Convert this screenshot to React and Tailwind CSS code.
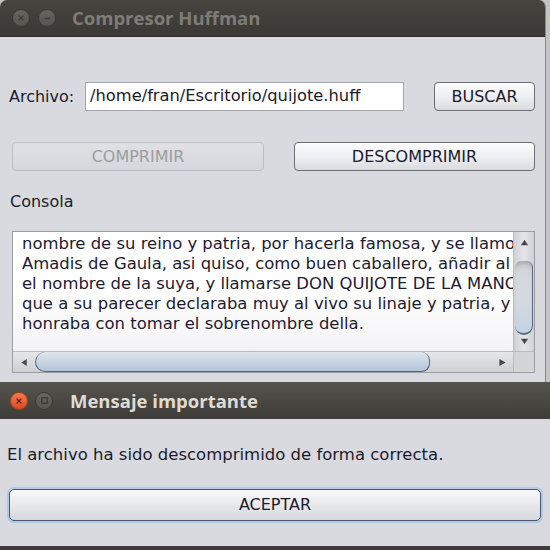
import React from "react";

const sans = { fontFamily: '"DejaVu Sans", sans-serif' };
const title = { fontFamily: '"Open Sans", "DejaVu Sans", sans-serif' };

const lines = [
  "nombre de su reino y patria, por hacerla famosa, y se llamo",
  "Amadis de Gaula, asi quiso, como buen caballero, añadir al suyo",
  "el nombre de la suya, y llamarse DON QUIJOTE DE LA MANCHA, con",
  "que a su parecer declaraba muy al vivo su linaje y patria, y la",
  "honraba con tomar el sobrenombre della.",
];

const Arrow = ({ dir }) => {
  const pts = {
    up: "1,7 5,1 9,7",
    down: "1,1 5,7 9,1",
    left: "7,1 1,5 7,9",
    right: "1,1 8,5 1,9",
  }[dir];
  const box = dir === "up" || dir === "down" ? "0 0 10 8" : "0 0 9 10";
  return (
    <svg viewBox={box} className="w-[9px] h-[9px]">
      <polygon points={pts} fill="#4a4a4a" />
    </svg>
  );
};

const TitleButton = ({ red, kind }) => (
  <div
    className={`w-[18px] h-[18px] rounded-full flex items-center justify-center ${
      red
        ? "bg-gradient-to-b from-[#f37a4f] to-[#d84a1c] border border-[#a8401c]"
        : "bg-gradient-to-b from-[#66655f] to-[#55544f] border border-[#3a3935]"
    }`}
  >
    {kind === "x" && (
      <svg viewBox="0 0 10 10" className="w-[8px] h-[8px]">
        <path d="M2 2 L8 8 M8 2 L2 8" stroke={red ? "#5a1a08" : "#3c3b37"} strokeWidth="1.6" />
      </svg>
    )}
    {kind === "min" && (
      <svg viewBox="0 0 10 10" className="w-[9px] h-[9px]">
        <path d="M2 5 L8 5" stroke="#3c3b37" strokeWidth="1.6" />
      </svg>
    )}
    {kind === "max" && (
      <svg viewBox="0 0 10 10" className="w-[9px] h-[9px]">
        <rect x="2" y="2" width="6" height="6" fill="none" stroke="#3a3935" strokeWidth="1.4" />
      </svg>
    )}
  </div>
);

const Button = ({ children, className = "", disabled }) => (
  <div
    className={`h-[29px] rounded-[4px] flex items-center justify-center text-[16px] ${
      disabled
        ? "border border-[#bcbec4] bg-gradient-to-b from-[#dfe1e5] to-[#d5d7dc] text-[#9d9d9f]"
        : "border border-[#6a6e76] bg-gradient-to-b from-[#fcfcfd] via-[#eeeff2] to-[#d9dbe0] text-[#1c1a2a] shadow-[inset_0_1px_0_#ffffff]"
    } ${className}`}
  >
    {children}
  </div>
);

export default function App() {
  return (
    <div className="w-[550px] h-[550px] overflow-hidden bg-[#c4c4c4] flex flex-col" style={sans}>
      {/* ventana principal */}
      <div className="w-[546px] h-[382px] flex flex-col rounded-t-[7px] overflow-hidden border-r border-[#8a8a8a]">
        <div className="h-[37px] bg-gradient-to-b from-[#45443f] to-[#3a3935] flex items-center pl-[12px] gap-[8px] border-b border-[#2c2b28]">
          <TitleButton kind="x" />
          <TitleButton kind="min" />
          <span className="ml-[8px] text-[18.5px] font-bold text-[#7e7c76]" style={title}>
            Compresor Huffman
          </span>
        </div>

        <div className="flex-1 bg-[#d8dae0] flex flex-col">
          <div className="flex items-center mt-[45px] h-[29px]">
            <span className="w-[85px] pl-[9px] text-[16px] text-[#1c1a2a]">Archivo:</span>
            <div className="w-[319px] h-[29px] bg-white border border-[#a3a5aa] flex items-center pl-[4px] text-[16.3px] text-[#1c1a2a] whitespace-nowrap overflow-hidden">
              /home/fran/Escritorio/quijote.huff
            </div>
            <Button className="w-[101px] ml-[30px]">BUSCAR</Button>
          </div>

          <div className="flex items-center mt-[31px] pl-[12px]">
            <Button disabled className="w-[252px]">COMPRIMIR</Button>
            <Button className="w-[241px] ml-[30px]">DESCOMPRIMIR</Button>
          </div>

          <div className="mt-[21px] pl-[10px] text-[16px] leading-[20px] text-[#1c1a2a]">Consola</div>

          <div className="ml-[12px] mt-[19px] w-[523px] h-[142px] border border-[#9b9da3] grid grid-cols-[1fr_21px] grid-rows-[1fr_21px] bg-[#d0d2d6]">
            <div className="bg-gradient-to-b from-white via-white to-[#f3f3f5] overflow-hidden pt-[2px] pl-[9px] text-[16.45px] leading-[20px] text-[#1e1a30] whitespace-pre">
              {lines.map((l) => (
                <div key={l}>{l}</div>
              ))}
            </div>

            <div className="bg-gradient-to-r from-[#cfd1d5] via-[#e4e5e8] to-[#cfd1d5] border-l border-[#b8bac0] flex flex-col items-center">
              <div className="h-[20px] flex items-center justify-center">
                <Arrow dir="up" />
              </div>
              <div className="flex-1 w-full relative">
                <div className="absolute left-[1px] right-[1px] top-[9px] h-[74px] rounded-b-[14px] rounded-t-[10px] bg-gradient-to-b from-[#d2d4d8] via-[#d6dae0] to-[#c3d4e6] border-b-2 border-r border-[#5b6a7c] shadow-[inset_0_6px_6px_-4px_#9a9ca2]" />
              </div>
              <div className="h-[20px] flex items-center justify-center">
                <Arrow dir="down" />
              </div>
            </div>

            <div className="bg-gradient-to-b from-[#e6e7ea] to-[#cdd0d5] border-t border-[#b8bac0] flex items-center">
              <div className="w-[22px] flex justify-center">
                <Arrow dir="left" />
              </div>
              <div className="w-[395px] h-[20px] rounded-l-[14px] rounded-r-[12px] bg-gradient-to-b from-[#dfe6ee] via-[#c8d5e3] to-[#b4c5d8] border border-[#56657a] border-t-0" />
              <div className="flex-1" />
              <div className="w-[22px] flex justify-center">
                <Arrow dir="right" />
              </div>
            </div>

            <div className="bg-[#d2d4d8] border-l border-t border-[#b8bac0]" />
          </div>
        </div>
      </div>

      {/* dialogo */}
      <div className="flex-1 flex flex-col">
        <div className="h-[37px] bg-gradient-to-b from-[#56544e] to-[#3d3c38] flex items-center pl-[10px] gap-[7px]">
          <TitleButton red kind="x" />
          <TitleButton kind="max" />
          <span className="ml-[10px] text-[18.5px] font-bold text-[#dfdbd2]" style={title}>
            Mensaje importante
          </span>
        </div>
        <div className="flex-1 bg-[#d8dae0] flex flex-col">
          <div className="mt-[26px] pl-[7px] text-[16.5px] leading-[20px] text-[#1c1a2a]">
            El archivo ha sido descomprimido de forma correcta.
          </div>
          <div className="mt-[24px] ml-[9px] w-[532px] h-[32px] rounded-[5px] border border-[#4b5668] bg-gradient-to-b from-[#f8f8fa] via-[#e8e9ec] to-[#d6d8dd] shadow-[0_0_0_2px_#b3c8e2] flex items-center justify-center text-[16px] text-[#1c1a2a]">
            ACEPTAR
          </div>
        </div>
        <div className="h-[4px] bg-[#3c3b37]" />
      </div>
    </div>
  );
}
